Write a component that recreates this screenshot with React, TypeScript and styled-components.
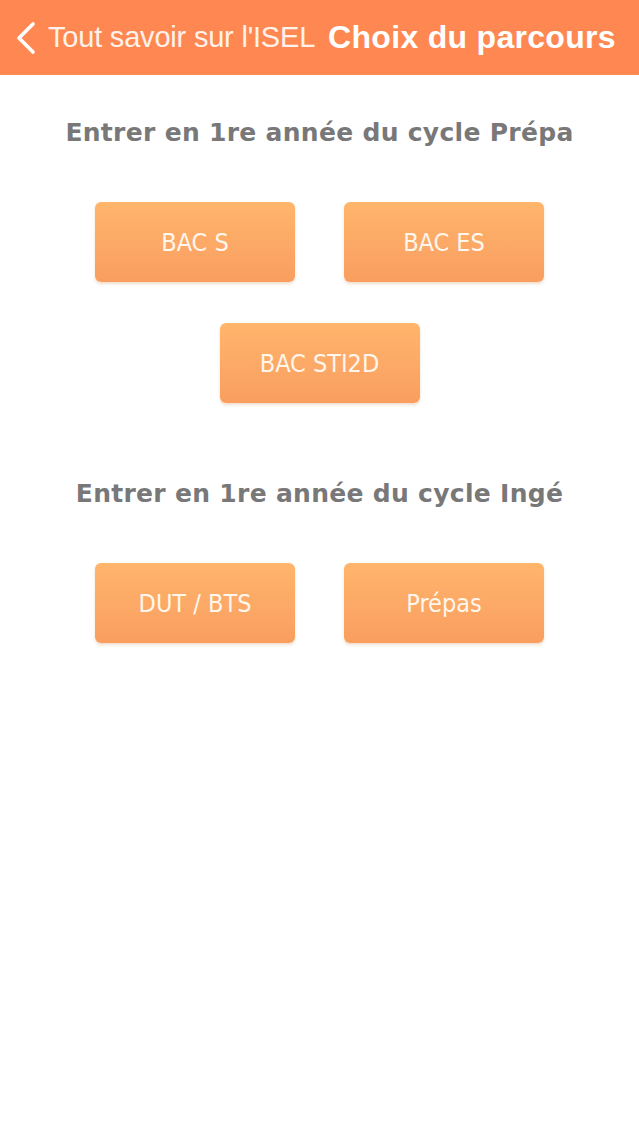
import React from "react";
import styled, { createGlobalStyle } from "styled-components";

const Global = createGlobalStyle`
  html, body { margin: 0; padding: 0; background: #ffffff; }
  body { font-family: "Liberation Sans", Arial, sans-serif; }
`;

const Page = styled.div`
  width: 639px;
  min-height: 1136px;
  background: #ffffff;
  display: flex;
  flex-direction: column;
`;

const NavBar = styled.header`
  height: 75px;
  background: #ff8852;
  display: flex;
  align-items: center;
  padding: 0 0 0 14px;
  box-sizing: border-box;
  color: #ffffff;
  white-space: nowrap;
  overflow: hidden;
`;

const BackIcon = styled.svg`
  width: 24px;
  height: 34px;
  flex: none;
  margin-right: 10px;
`;

const BackLabel = styled.span`
  font-family: "Liberation Sans", Arial, sans-serif;
  font-size: 29px;
  letter-spacing: -0.2px;
  color: #fff2ea;
`;

const Title = styled.span`
  font-family: "Liberation Sans", Arial, sans-serif;
  font-weight: bold;
  font-size: 32px;
  letter-spacing: 0.3px;
  margin-left: 13px;
`;

const Section = styled.section<{ $top: number }>`
  margin-top: ${(p) => p.$top}px;
  display: flex;
  flex-direction: column;
  align-items: center;
`;

const Heading = styled.h2`
  margin: 0;
  font-family: "DejaVu Sans", Verdana, sans-serif;
  font-weight: bold;
  font-size: 25px;
  line-height: 30px;
  color: #787878;
  letter-spacing: 0.3px;
`;

const ButtonGrid = styled.div`
  margin-top: 54px;
  display: flex;
  flex-wrap: wrap;
  justify-content: center;
  column-gap: 49px;
  row-gap: 41px;
  width: 460px;
`;

const ChoiceButton = styled.button`
  width: 200px;
  height: 80px;
  border: none;
  border-radius: 6px;
  background: linear-gradient(180deg, #ffb56c 0%, #fca866 55%, #f99e5e 100%);
  box-shadow: 0 2px 3px rgba(200, 120, 60, 0.25);
  color: #fff6ec;
  font-family: "DejaVu Sans Condensed", "DejaVu Sans", sans-serif;
  font-size: 25px;
  padding: 0;
  cursor: pointer;
`;

export default function App() {
  return (
    <Page>
      <Global />
      <NavBar>
        <BackIcon viewBox="0 0 24 34">
          <path
            d="M19 3 L5 17 L19 31"
            fill="none"
            stroke="#ffffff"
            strokeWidth="3.6"
            strokeLinecap="round"
            strokeLinejoin="round"
          />
        </BackIcon>
        <BackLabel>Tout savoir sur l'ISEL</BackLabel>
        <Title>Choix du parcours</Title>
      </NavBar>

      <Section $top={43}>
        <Heading>Entrer en 1re année du cycle Prépa</Heading>
        <ButtonGrid>
          <ChoiceButton>BAC S</ChoiceButton>
          <ChoiceButton>BAC ES</ChoiceButton>
          <ChoiceButton>BAC STI2D</ChoiceButton>
        </ButtonGrid>
      </Section>

      <Section $top={76}>
        <Heading>Entrer en 1re année du cycle Ingé</Heading>
        <ButtonGrid>
          <ChoiceButton>DUT / BTS</ChoiceButton>
          <ChoiceButton>Prépas</ChoiceButton>
        </ButtonGrid>
      </Section>
    </Page>
  );
}
